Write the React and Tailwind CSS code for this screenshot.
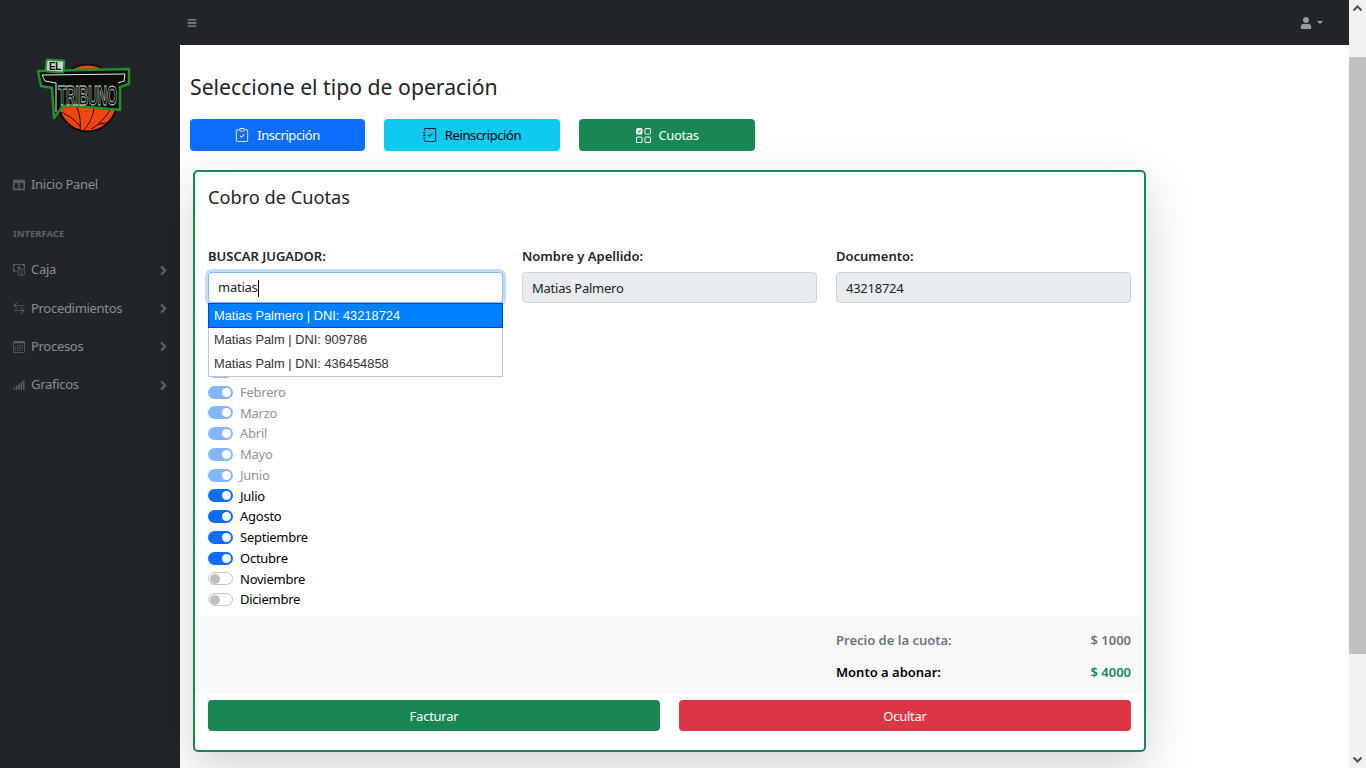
import { FaBars, FaUser, FaColumns, FaAngleRight, FaSignal } from "react-icons/fa"
import { BsCashCoin, BsArrowLeftRight, BsCalendar3, BsClipboardCheck, BsJournalCheck, BsUiChecksGrid } from "react-icons/bs"

const menu = [
  { label: "Caja", Icon: BsCashCoin },
  { label: "Procedimientos", Icon: BsArrowLeftRight },
  { label: "Procesos", Icon: BsCalendar3 },
  { label: "Graficos", Icon: FaSignal },
]

const months = [
  { name: "Enero", state: "paid" },
  { name: "Febrero", state: "paid" },
  { name: "Marzo", state: "paid" },
  { name: "Abril", state: "paid" },
  { name: "Mayo", state: "paid" },
  { name: "Junio", state: "paid" },
  { name: "Julio", state: "on" },
  { name: "Agosto", state: "on" },
  { name: "Septiembre", state: "on" },
  { name: "Octubre", state: "on" },
  { name: "Noviembre", state: "off" },
  { name: "Diciembre", state: "off" },
]

function Logo() {
  return (
    <svg width="95" height="80" viewBox="36 56 95 80" className="block">
      <ellipse cx="87.5" cy="98" rx="30.5" ry="33.5" fill="#f2450f" stroke="#0c0f0c" strokeWidth="2" />
      <g fill="none" stroke="#1a1208" strokeWidth="1">
        <path d="M75 104c5 8 6 18 5 26" />
        <path d="M94 106c0 9-4 17-10 24" />
        <path d="M111 108c-4 8-12 17-20 21" />
        <path d="M60 112c10 3 16 10 20 14" />
        <path d="M97 125c5-2 12-3 17-2" />
      </g>
      <path d="M38 71 129 69 129 84 120 87 120 110 68 105 62 107 54 118 52 88 41 86Z" fill="#0a0d0a" stroke="#1f8f2c" strokeWidth="2.5" strokeLinejoin="round" />
      <path d="M42 75 125 74 124 81 118 83" fill="none" stroke="#e6eee6" strokeWidth="1" />
      <path d="M42 75 45 81 56 83 56 112" fill="none" stroke="#e6eee6" strokeWidth="1" />
      <text x="58" y="105" textLength="59" lengthAdjust="spacingAndGlyphs" fontFamily="'Liberation Sans', sans-serif" fontSize="27" fontWeight="700" fill="#0a0d0a" stroke="#dfe6df" strokeWidth="0.8">TRIBUNO</text>
      <rect x="46" y="60" width="18" height="12" rx="1.5" fill="#c9d4c6" stroke="#1f8f2c" strokeWidth="2" transform="rotate(4 55 66)" />
      <text x="49" y="70" fontFamily="'Liberation Sans', sans-serif" fontSize="10" fontWeight="700" fill="#0a0d0a">EL</text>
    </svg>
  )
}

function Sidebar() {
  return (
    <aside className="w-[180px] shrink-0 bg-[#212529] text-[#8b8e91] text-[13px] tracking-[-0.3px]">
      <div className="pt-[56px] pl-[36px]">
        <Logo />
      </div>
      <a className="flex items-center h-[20px] mt-[39px] pl-[13px]">
        <FaColumns className="text-[#5e6266] w-[12px] h-[12px]" />
        <span className="ml-[6px]">Inicio Panel</span>
      </a>
      <div className="mt-[31px] pl-[13px] text-[9.5px] font-bold tracking-normal text-[#5e6266] leading-[16px]">INTERFACE</div>
      <div className="mt-[18px] flex flex-col gap-[18.4px]">
        {menu.map(({ label, Icon }) => (
          <a key={label} className="flex items-center h-[20px] pl-[13px] pr-[9px]">
            <Icon className="text-[#5e6266] w-[12px] h-[12px]" />
            <span className="ml-[6px]">{label}</span>
            <FaAngleRight className="ml-auto text-[#5e6266] w-[15px] h-[15px]" />
          </a>
        ))}
      </div>
    </aside>
  )
}

function Switch({ state }) {
  if (state === "off") {
    return (
      <span className="flex items-center w-[25px] h-[13px] rounded-full border border-[#c4c4c4] bg-white pl-[1px]">
        <span className="w-[10px] h-[10px] rounded-full bg-[#bfbfbf]" />
      </span>
    )
  }
  return (
    <span className={`flex items-center justify-end w-[25px] h-[13px] rounded-full bg-[#0d6efd] pr-[2px] ${state === "paid" ? "opacity-50" : ""}`}>
      <span className="w-[9px] h-[9px] rounded-full bg-white" />
    </span>
  )
}

function ReadOnlyField({ label, value }) {
  return (
    <div>
      <label className="block font-semibold tracking-normal leading-[21px] mb-[5px]">{label}</label>
      <input
        readOnly
        value={value}
        className="block w-full h-[31px] px-[9px] pt-[1px] bg-[#e9ecef] border border-[#ced4da] rounded-[4px] text-[#212529] outline-none"
      />
    </div>
  )
}

export default function App() {
  return (
    <div className="flex h-screen overflow-hidden bg-white text-[#212529] text-[13px] tracking-[-0.25px] font-['Noto_Sans',sans-serif]">
      <Sidebar />
      <div className="flex-1 flex flex-col min-w-0">
        <header className="h-[45px] shrink-0 bg-[#212529] flex items-center justify-between pl-[7px] pr-[26px]">
          <FaBars className="w-[10px] h-[10px] text-[#8b8e91]" />
          <div className="flex items-center gap-[5px] text-[#9a9c9e]">
            <FaUser className="w-[12px] h-[12px]" />
            <svg width="6" height="3" viewBox="0 0 6 3"><path d="M0 0h6L3 3Z" fill="currentColor" /></svg>
          </div>
        </header>
        <main className="flex-1 px-[10px]">
          <h1 className="pt-[27px] text-[21.2px] tracking-normal leading-[30px] mb-[17px]">Seleccione el tipo de operación</h1>
          <div className="flex gap-[19px] tracking-[-0.4px]">
            <button className="w-[175px] h-[32px] pt-[2px] rounded-[4px] bg-[#0d6efd] text-white flex items-center justify-center gap-[8px]">
              <BsClipboardCheck className="w-[14px] h-[16px] -mt-[2px]" /> Inscripción
            </button>
            <button className="w-[176px] h-[32px] pt-[2px] rounded-[4px] bg-[#0dcaf0] text-black flex items-center justify-center gap-[8px]">
              <BsJournalCheck className="w-[14px] h-[16px] -mt-[2px]" /> Reinscripción
            </button>
            <button className="w-[176px] h-[32px] pt-[2px] rounded-[4px] bg-[#198754] text-white flex items-center justify-center gap-[8px]">
              <BsUiChecksGrid className="w-[15px] h-[15px] -mt-[2px]" /> Cuotas
            </button>
          </div>

          <section className="mt-[19px] ml-[3px] w-[953px] border-2 border-[#198754] rounded-[5px] bg-white shadow-[0_16px_48px_rgba(0,0,0,0.175)]">
            <div className="px-[13px] pt-[13px]">
              <h2 className="text-[18.2px] tracking-normal leading-[25px] mb-[36px]">Cobro de Cuotas</h2>
              <div className="grid grid-cols-3 gap-[19px]">
                <div className="relative">
                  <label className="block font-semibold tracking-normal leading-[21px] mb-[5px]">BUSCAR JUGADOR:</label>
                  <div className="h-[31px] px-[9px] pt-[1px] flex items-center bg-white border border-[#86b7fe] rounded-[4px] shadow-[0_0_0_3px_rgba(13,110,253,0.25)]">
                    matias<span className="w-px h-[17px] bg-black" />
                  </div>
                  <ul className="absolute z-10 top-[57px] left-0 w-[295px] bg-white border border-[#c5c5c5] font-['Liberation_Sans',sans-serif] text-[12.85px] tracking-normal text-[#333]">
                    <li className="h-[25px] -mx-px -mt-px px-[5px] flex items-center bg-[#007fff] border border-[#003eff] text-white">Matias Palmero | DNI: 43218724</li>
                    <li className="h-[24px] px-[5px] flex items-center">Matias Palm | DNI: 909786</li>
                    <li className="h-[24px] px-[5px] flex items-center">Matias Palm | DNI: 436454858</li>
                  </ul>
                </div>
                <ReadOnlyField label="Nombre y Apellido:" value="Matias Palmero" />
                <ReadOnlyField label="Documento:" value="43218724" />
              </div>

              <div className="mt-[58px] flex flex-col">
                {months.map((m) => (
                  <div key={m.name} className={`flex items-center gap-[7px] h-[20.75px] ${m.state === "paid" ? "text-[#909294]" : "text-black"}`}>
                    <Switch state={m.state} />
                    <span className="pt-[1px]">{m.name}</span>
                  </div>
                ))}
              </div>
            </div>

            <div className="mt-[7px] mr-[3px] bg-[#f8f9fa] pt-[13px] pb-[11px] pr-[10px] flex justify-end">
              <div className="w-[295px] flex flex-col gap-[11px] font-semibold tracking-normal leading-[21px]">
                <div className="flex justify-between text-[#6c757d]">
                  <span>Precio de la cuota:</span>
                  <span>$ 1000</span>
                </div>
                <div className="flex justify-between text-black">
                  <span>Monto a abonar:</span>
                  <span className="text-[#198754]">$ 4000</span>
                </div>
              </div>
            </div>

            <div className="grid grid-cols-2 gap-[19px] px-[13px] pt-[6px] pb-[19px]">
              <button className="h-[31px] pt-[2px] rounded-[4px] bg-[#198754] text-white">Facturar</button>
              <button className="h-[31px] pt-[2px] rounded-[4px] bg-[#dc3545] text-white">Ocultar</button>
            </div>
          </section>
        </main>
      </div>

      <div className="w-[17px] shrink-0 bg-[#f1f1f1] flex flex-col items-center text-[#505050]">
        <svg width="17" height="17" viewBox="0 0 17 17" className="shrink-0"><path d="M4.5 10.5 8.5 6.5 12.5 10.5" fill="none" stroke="currentColor" strokeWidth="2" /></svg>
        <div className="w-full h-[597px] mt-[40px] bg-[#c1c1c1]" />
        <svg width="17" height="17" viewBox="0 0 17 17" className="shrink-0 mt-auto"><path d="M4.5 6.5 8.5 10.5 12.5 6.5" fill="none" stroke="currentColor" strokeWidth="2" /></svg>
      </div>
    </div>
  )
}
